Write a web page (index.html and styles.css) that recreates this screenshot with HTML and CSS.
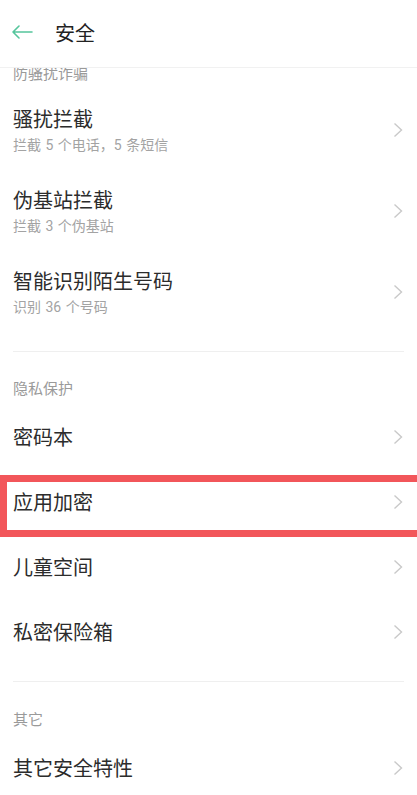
FILE: index.html
```html
<!DOCTYPE html>
<html lang="zh-CN">
<head>
<meta charset="utf-8">
<title>安全</title>
<link rel="stylesheet" href="styles.css">
</head>
<body>
<div class="page">
  <header class="topbar">
    <svg class="back" width="22" height="14" viewBox="0 0 22 14"><path d="M21 7H2M8 1L2 7l6 6" fill="none" stroke="#55c59c" stroke-width="1.6" stroke-linecap="round" stroke-linejoin="round"/></svg>
    <h1 class="title">安全</h1>
  </header>

  <div class="label label-first">防骚扰诈骗</div>
  <div class="item two">
    <div class="texts">
      <div class="main">骚扰拦截</div>
      <div class="sub">拦截 5 个电话，5 条短信</div>
    </div>
    <svg class="chev" width="10" height="16" viewBox="0 0 10 16"><path d="M1.5 1.5L8.5 8l-7 6.5" fill="none" stroke="#c9c9c9" stroke-width="1.4"/></svg>
  </div>
  <div class="item two">
    <div class="texts">
      <div class="main">伪基站拦截</div>
      <div class="sub">拦截 3 个伪基站</div>
    </div>
    <svg class="chev" width="10" height="16" viewBox="0 0 10 16"><path d="M1.5 1.5L8.5 8l-7 6.5" fill="none" stroke="#c9c9c9" stroke-width="1.4"/></svg>
  </div>
  <div class="item two">
    <div class="texts">
      <div class="main">智能识别陌生号码</div>
      <div class="sub">识别 36 个号码</div>
    </div>
    <svg class="chev" width="10" height="16" viewBox="0 0 10 16"><path d="M1.5 1.5L8.5 8l-7 6.5" fill="none" stroke="#c9c9c9" stroke-width="1.4"/></svg>
  </div>
  <div class="divider d1"></div>

  <div class="label">隐私保护</div>
  <div class="item one first">
    <div class="main">密码本</div>
    <svg class="chev" width="10" height="16" viewBox="0 0 10 16"><path d="M1.5 1.5L8.5 8l-7 6.5" fill="none" stroke="#c9c9c9" stroke-width="1.4"/></svg>
  </div>
  <div class="item one marked">
    <div class="main">应用加密</div>
    <svg class="chev" width="10" height="16" viewBox="0 0 10 16"><path d="M1.5 1.5L8.5 8l-7 6.5" fill="none" stroke="#c9c9c9" stroke-width="1.4"/></svg>
    <div class="highlight"></div>
  </div>
  <div class="item one">
    <div class="main">儿童空间</div>
    <svg class="chev" width="10" height="16" viewBox="0 0 10 16"><path d="M1.5 1.5L8.5 8l-7 6.5" fill="none" stroke="#c9c9c9" stroke-width="1.4"/></svg>
  </div>
  <div class="item one">
    <div class="main">私密保险箱</div>
    <svg class="chev" width="10" height="16" viewBox="0 0 10 16"><path d="M1.5 1.5L8.5 8l-7 6.5" fill="none" stroke="#c9c9c9" stroke-width="1.4"/></svg>
  </div>
  <div class="divider d2"></div>

  <div class="label l3">其它</div>
  <div class="item one first">
    <div class="main">其它安全特性</div>
    <svg class="chev" width="10" height="16" viewBox="0 0 10 16"><path d="M1.5 1.5L8.5 8l-7 6.5" fill="none" stroke="#c9c9c9" stroke-width="1.4"/></svg>
  </div>
</div>
</body>
</html>
```

FILE: styles.css
```css
html, body {
  margin: 0;
  padding: 0;
  background: #fff;
}
body {
  font-family: "Noto Sans CJK SC", "Noto Sans", sans-serif;
  overflow: hidden;
  width: 417px;
  height: 795px;
}
.page {
  width: 417px;
  position: relative;
}
.topbar {
  height: 67px;
  border-bottom: 1px solid #f1f1f1;
  display: flex;
  align-items: center;
  position: relative;
  z-index: 2;
  background: #fff;
}
.back {
  margin-left: 11px;
  margin-top: -3px;
}
.title {
  margin: -2px 0 0 22px;
  font-size: 20px;
  font-weight: 400;
  color: #222;
  line-height: 28px;
}
.label {
  font-size: 15px;
  line-height: 20px;
  color: #9a9a9a;
  padding: 26px 13px 0;
}
.label-first {
  line-height: 16px;
  height: 16px;
  padding-top: 0;
  margin-top: -3px;
  position: relative;
  z-index: 1;
}
.l3 {
  padding-top: 27px;
}
.item {
  display: flex;
  align-items: center;
  justify-content: space-between;
  padding: 0 14px 0 13px;
  position: relative;
}
.item.two {
  height: 81px;
  box-sizing: border-box;
  padding-top: 11px;
  padding-bottom: 20px;
}
.label-first + .item {
  margin-top: 13px;
}
.texts {
  display: flex;
  flex-direction: column;
}
.main {
  font-size: 20px;
  line-height: 28px;
  color: #2c2c2c;
}
.sub {
  font-family: Roboto, "Noto Sans CJK SC", sans-serif;
  font-size: 14px;
  line-height: 20px;
  color: #a3a3a3;
  margin-top: 2px;
  word-spacing: 1px;
}
.item.one {
  height: 65px;
}
.item.one.first {
  margin-top: 6px;
}
.chev {
  flex: none;
}
.divider {
  height: 1px;
  background: #efefef;
  margin: 0 13px;
}
.d1 {
  margin-top: 14px;
}
.d2 {
  margin-top: 17px;
}
.highlight {
  position: absolute;
  top: 6px;
  bottom: -3px;
  left: 0;
  right: -20px;
  border: 7px solid #f2565a;
  pointer-events: none;
}
```
